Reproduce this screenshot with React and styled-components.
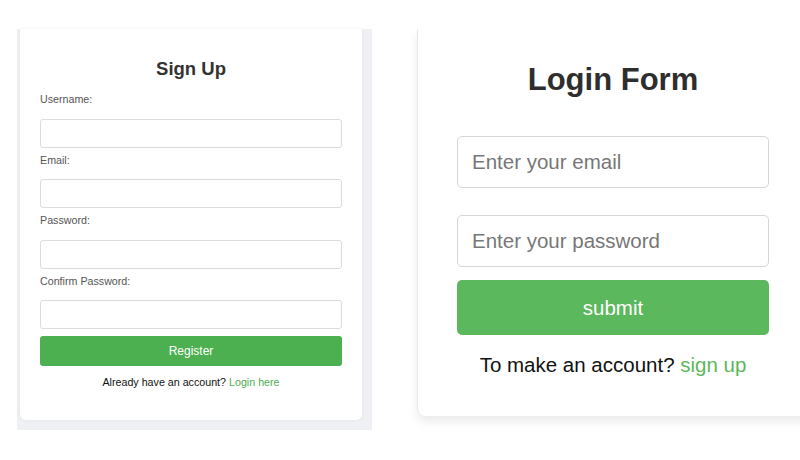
import React from "react";
import styled, { createGlobalStyle } from "styled-components";

const GlobalStyle = createGlobalStyle`
  html, body {
    margin: 0;
    padding: 0;
    background: #ffffff;
    font-family: "Liberation Sans", Arial, sans-serif;
  }
  * {
    box-sizing: border-box;
  }
`;

const Page = styled.div`
  width: 800px;
  height: 460px;
  overflow: hidden;
  display: flex;
  align-items: flex-start;
  gap: 45px;
  padding: 29px 0 0 17px;
`;

/* left screenshot: sign up */
const SignUpShell = styled.div`
  width: 355px;
  flex-shrink: 0;
  background: #eff0f3;
  padding: 0 10px 10px 3px;
`;

const SignUpCard = styled.div`
  background: #fff;
  height: 391px;
  border-radius: 0 0 6px 6px;
  padding: 29px 20px 0;
  box-shadow: 0 0 4px rgba(0, 0, 0, 0.05);
`;

const SignUpTitle = styled.h2`
  margin: 0 0 13px;
  font-size: 18.5px;
  line-height: 22px;
  font-weight: 700;
  color: #333;
  text-align: center;
`;

const Label = styled.label`
  display: block;
  margin: 6px 0 12.5px;
  font-size: 10.7px;
  line-height: 13px;
  color: #555;
`;

const SmallInput = styled.input`
  display: block;
  width: 100%;
  height: 29px;
  border: 1px solid #dcdcdc;
  border-radius: 3px;
  padding: 0 8px;
  font-family: inherit;
  font-size: 11px;
  background: #fff;
  outline: none;
`;

const RegisterButton = styled.button`
  display: block;
  width: 100%;
  height: 30px;
  margin-top: 7px;
  border: none;
  border-radius: 3px;
  background: #4caf50;
  color: #fff;
  font-family: inherit;
  font-size: 12px;
`;

const Footnote = styled.p`
  margin: ${(p) => p.$top} 0 0;
  text-align: center;
  font-size: ${(p) => p.$size};
  line-height: ${(p) => p.$line};
  color: #111;
`;

const GreenLink = styled.a`
  color: ${(p) => p.$color};
  text-decoration: none;
`;

/* right screenshot: login */
const LoginCard = styled.div`
  width: 391px;
  flex-shrink: 0;
  height: 387px;
  background: #fff;
  border-left: 1px solid #e8e8e8;
  border-radius: 0 0 0 8px;
  padding: 33px 39px 0;
  box-shadow: 0 6px 10px rgba(0, 0, 0, 0.08);
`;

const LoginTitle = styled.h1`
  margin: 0 0 38px;
  font-size: 31px;
  line-height: 36px;
  font-weight: 700;
  color: #2e2e2e;
  text-align: center;
`;

const BigInput = styled.input`
  display: block;
  width: 100%;
  height: 52px;
  margin-bottom: ${(p) => p.$gap};
  border: 1.5px solid #d6d6d6;
  border-radius: 5px;
  padding: 0 14px;
  font-family: inherit;
  font-size: 20.5px;
  color: #333;
  outline: none;
  &::placeholder {
    color: #777;
  }
`;

const SubmitButton = styled.button`
  display: block;
  width: 100%;
  height: 55px;
  border: none;
  border-radius: 5px;
  background: #5cb85c;
  color: #fff;
  font-family: inherit;
  font-size: 20.5px;
`;

const fields = ["Username:", "Email:", "Password:", "Confirm Password:"];

export default function App() {
  return (
    <>
      <GlobalStyle />
      <Page>
        <SignUpShell>
          <SignUpCard>
            <SignUpTitle>Sign Up</SignUpTitle>
            {fields.map((f) => (
              <div key={f}>
                <Label>{f}</Label>
                <SmallInput type={f.includes("Password") ? "password" : "text"} />
              </div>
            ))}
            <RegisterButton>Register</RegisterButton>
            <Footnote $top="10px" $size="10.7px" $line="13px">
              Already have an account? <GreenLink $color="#4caf50" href="#">Login here</GreenLink>
            </Footnote>
          </SignUpCard>
        </SignUpShell>

        <LoginCard>
          <LoginTitle>Login Form</LoginTitle>
          <BigInput $gap="27px" placeholder="Enter your email" />
          <BigInput $gap="13px" type="password" placeholder="Enter your password" />
          <SubmitButton>submit</SubmitButton>
          <Footnote $top="18px" $size="20.5px" $line="24px">
            To make an account? <GreenLink $color="#5cb85c" href="#">sign up</GreenLink>
          </Footnote>
        </LoginCard>
      </Page>
    </>
  );
}
